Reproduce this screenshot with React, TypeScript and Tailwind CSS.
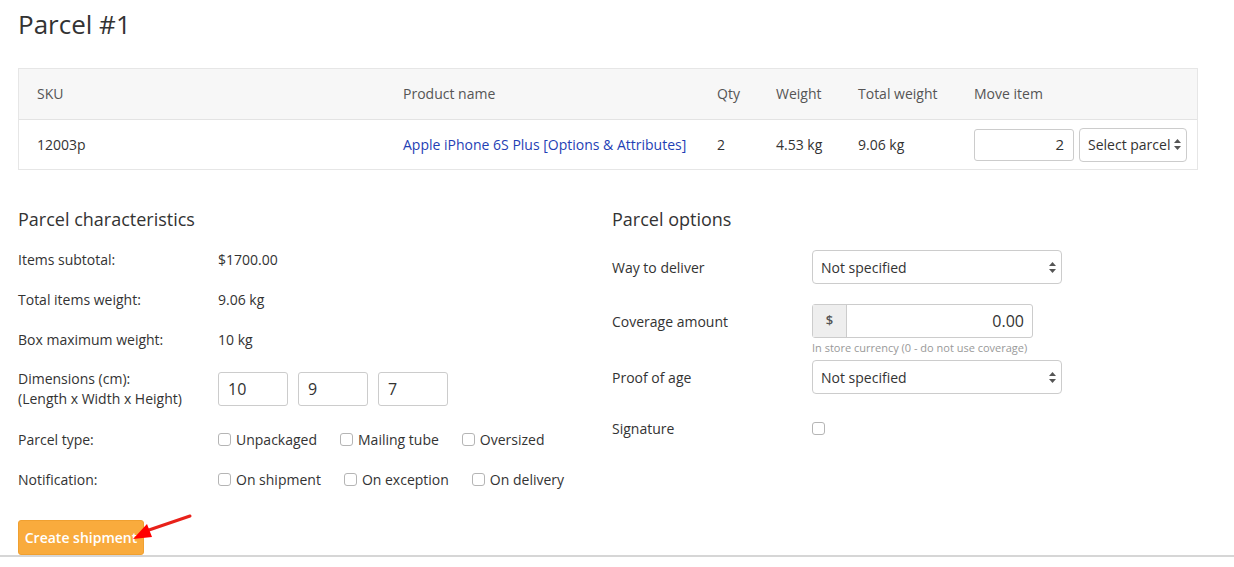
import React from "react";

const cols = "grid grid-cols-[366px_314px_59px_82px_116px_1fr]";

function Check({ label }: { label?: string }) {
  return (
    <span className="flex items-center gap-[5px]">
      <span className="block h-[13px] w-[13px] rounded-[3px] border border-[#b5b5b5] bg-white" />
      {label && <span>{label}</span>}
    </span>
  );
}

function Select({ text, w }: { text: string; w: string }) {
  return (
    <div className={`${w} flex h-[34px] items-center justify-between rounded-[4px] border border-[#ccc] bg-white pl-[8px] pr-[5px]`}>
      <span className="whitespace-nowrap">{text}</span>
      <svg width="7" height="11" viewBox="0 0 7 11" className="shrink-0 text-[#555]">
        <path d="M3.5 0 L7 4 H0 Z" fill="currentColor" />
        <path d="M3.5 11 L7 7 H0 Z" fill="currentColor" />
      </svg>
    </div>
  );
}

function Row({ label, children, h = "h-10" }: { label: React.ReactNode; children?: React.ReactNode; h?: string }) {
  return (
    <div className={`flex items-center ${h}`}>
      <div className="w-[200px] shrink-0">{label}</div>
      <div className="flex items-center">{children}</div>
    </div>
  );
}

export default function App() {
  return (
    <div className="relative min-h-[567px] bg-white font-['Open_Sans',sans-serif] text-[14px] text-[#333]">
      <div className="px-[18px]">
        <h1 className="mt-[6px] text-[26px] leading-[36px] font-normal text-[#333]">Parcel #1</h1>

        <div className="mt-[26px] w-[1180px] border border-[#e6e6e6]">
          <div className={`${cols} h-[51px] items-center bg-[#f7f7f7] border-b border-[#e3e3e3] pb-[2px] text-[#555]`}>
            <div className="pl-[18px]">SKU</div>
            <div className="pl-[18px]">Product name</div>
            <div className="pl-[18px]">Qty</div>
            <div className="pl-[18px]">Weight</div>
            <div className="pl-[18px]">Total weight</div>
            <div className="pl-[18px]">Move item</div>
          </div>
          <div className={`${cols} h-[49px] items-center`}>
            <div className="pl-[18px]">12003p</div>
            <div className="pl-[18px] text-[#1f3fb5]">Apple iPhone 6S Plus [Options &amp; Attributes]</div>
            <div className="pl-[18px]">2</div>
            <div className="pl-[18px]">4.53 kg</div>
            <div className="pl-[18px]">9.06 kg</div>
            <div className="flex items-center gap-[5px] pl-[18px]">
              <div className="flex h-[32px] w-[100px] items-center justify-end rounded-[3px] border border-[#ccc] pr-[9px] text-[15px]">2</div>
              <Select text="Select parcel" w="w-[108px]" />
            </div>
          </div>
        </div>

        <div className="mt-[29px] grid grid-cols-[576px_1fr] gap-[18px]">
          <div>
            <h2 className="flex h-10 items-center text-[18px] font-normal">Parcel characteristics</h2>
            <Row label="Items subtotal:">$1700.00</Row>
            <Row label="Total items weight:">9.06 kg</Row>
            <Row label="Box maximum weight:">10 kg</Row>
            <Row
              h="h-[60px]"
              label={
                <div className="leading-[20px]">
                  Dimensions (cm):
                  <br />
                  (Length x Width x Height)
                </div>
              }
            >
              <div className="flex gap-[10px]">
                {["10", "9", "7"].map((v) => (
                  <div key={v} className="flex h-[34px] w-[70px] items-center rounded-[3px] border border-[#ccc] pl-[9px] text-[16px]">
                    {v}
                  </div>
                ))}
              </div>
            </Row>
            <Row label="Parcel type:">
              <div className="flex gap-[23px]">
                <Check label="Unpackaged" />
                <Check label="Mailing tube" />
                <Check label="Oversized" />
              </div>
            </Row>
            <Row label="Notification:">
              <div className="flex gap-[23px]">
                <Check label="On shipment" />
                <Check label="On exception" />
                <Check label="On delivery" />
              </div>
            </Row>
            <button className="mt-[21px] flex h-[35px] w-[126px] items-center justify-center rounded-[3px] border border-[#f0a030] bg-[#f9ab3d] text-[14px] font-semibold text-white">
              Create shipment
            </button>
          </div>

          <div>
            <h2 className="flex h-10 items-center text-[18px] font-normal">Parcel options</h2>
            <div className="mt-[11px]">
              <Row h="h-[34px]" label="Way to deliver">
                <Select text="Not specified" w="w-[250px]" />
              </Row>
            </div>
            <div className="mt-[20px]">
              <Row h="h-[34px]" label="Coverage amount">
                <div className="flex h-[34px] w-[221px] rounded-[3px] border border-[#ccc]">
                  <div className="flex w-[34px] items-center justify-center border-r border-[#ccc] bg-[#eee] text-[13px] font-semibold text-[#555]">$</div>
                  <div className="flex flex-1 items-center justify-end pr-[8px] text-[16px]">0.00</div>
                </div>
              </Row>
            </div>
            <div className="ml-[200px] mt-[2px] h-[16px] text-[11px] leading-[16px] text-[#999]">
              In store currency (0 - do not use coverage)
            </div>
            <div className="mt-[4px]">
              <Row h="h-[34px]" label="Proof of age">
                <Select text="Not specified" w="w-[250px]" />
              </Row>
            </div>
            <div className="mt-[24px]">
              <Row h="h-5" label="Signature">
                <Check />
              </Row>
            </div>
          </div>
        </div>
      </div>

      <div className="border-t-2 border-[#d6d6d6]" />

      <svg className="absolute left-0 top-0" width="200" height="560" viewBox="0 0 200 560">
        <line x1="190" y1="510" x2="146" y2="525" stroke="#e8211a" strokeWidth="3" strokeLinecap="round" />
        <path d="M133 533 L147 518 L152 531 Z" fill="#f00" />
      </svg>
    </div>
  );
}
